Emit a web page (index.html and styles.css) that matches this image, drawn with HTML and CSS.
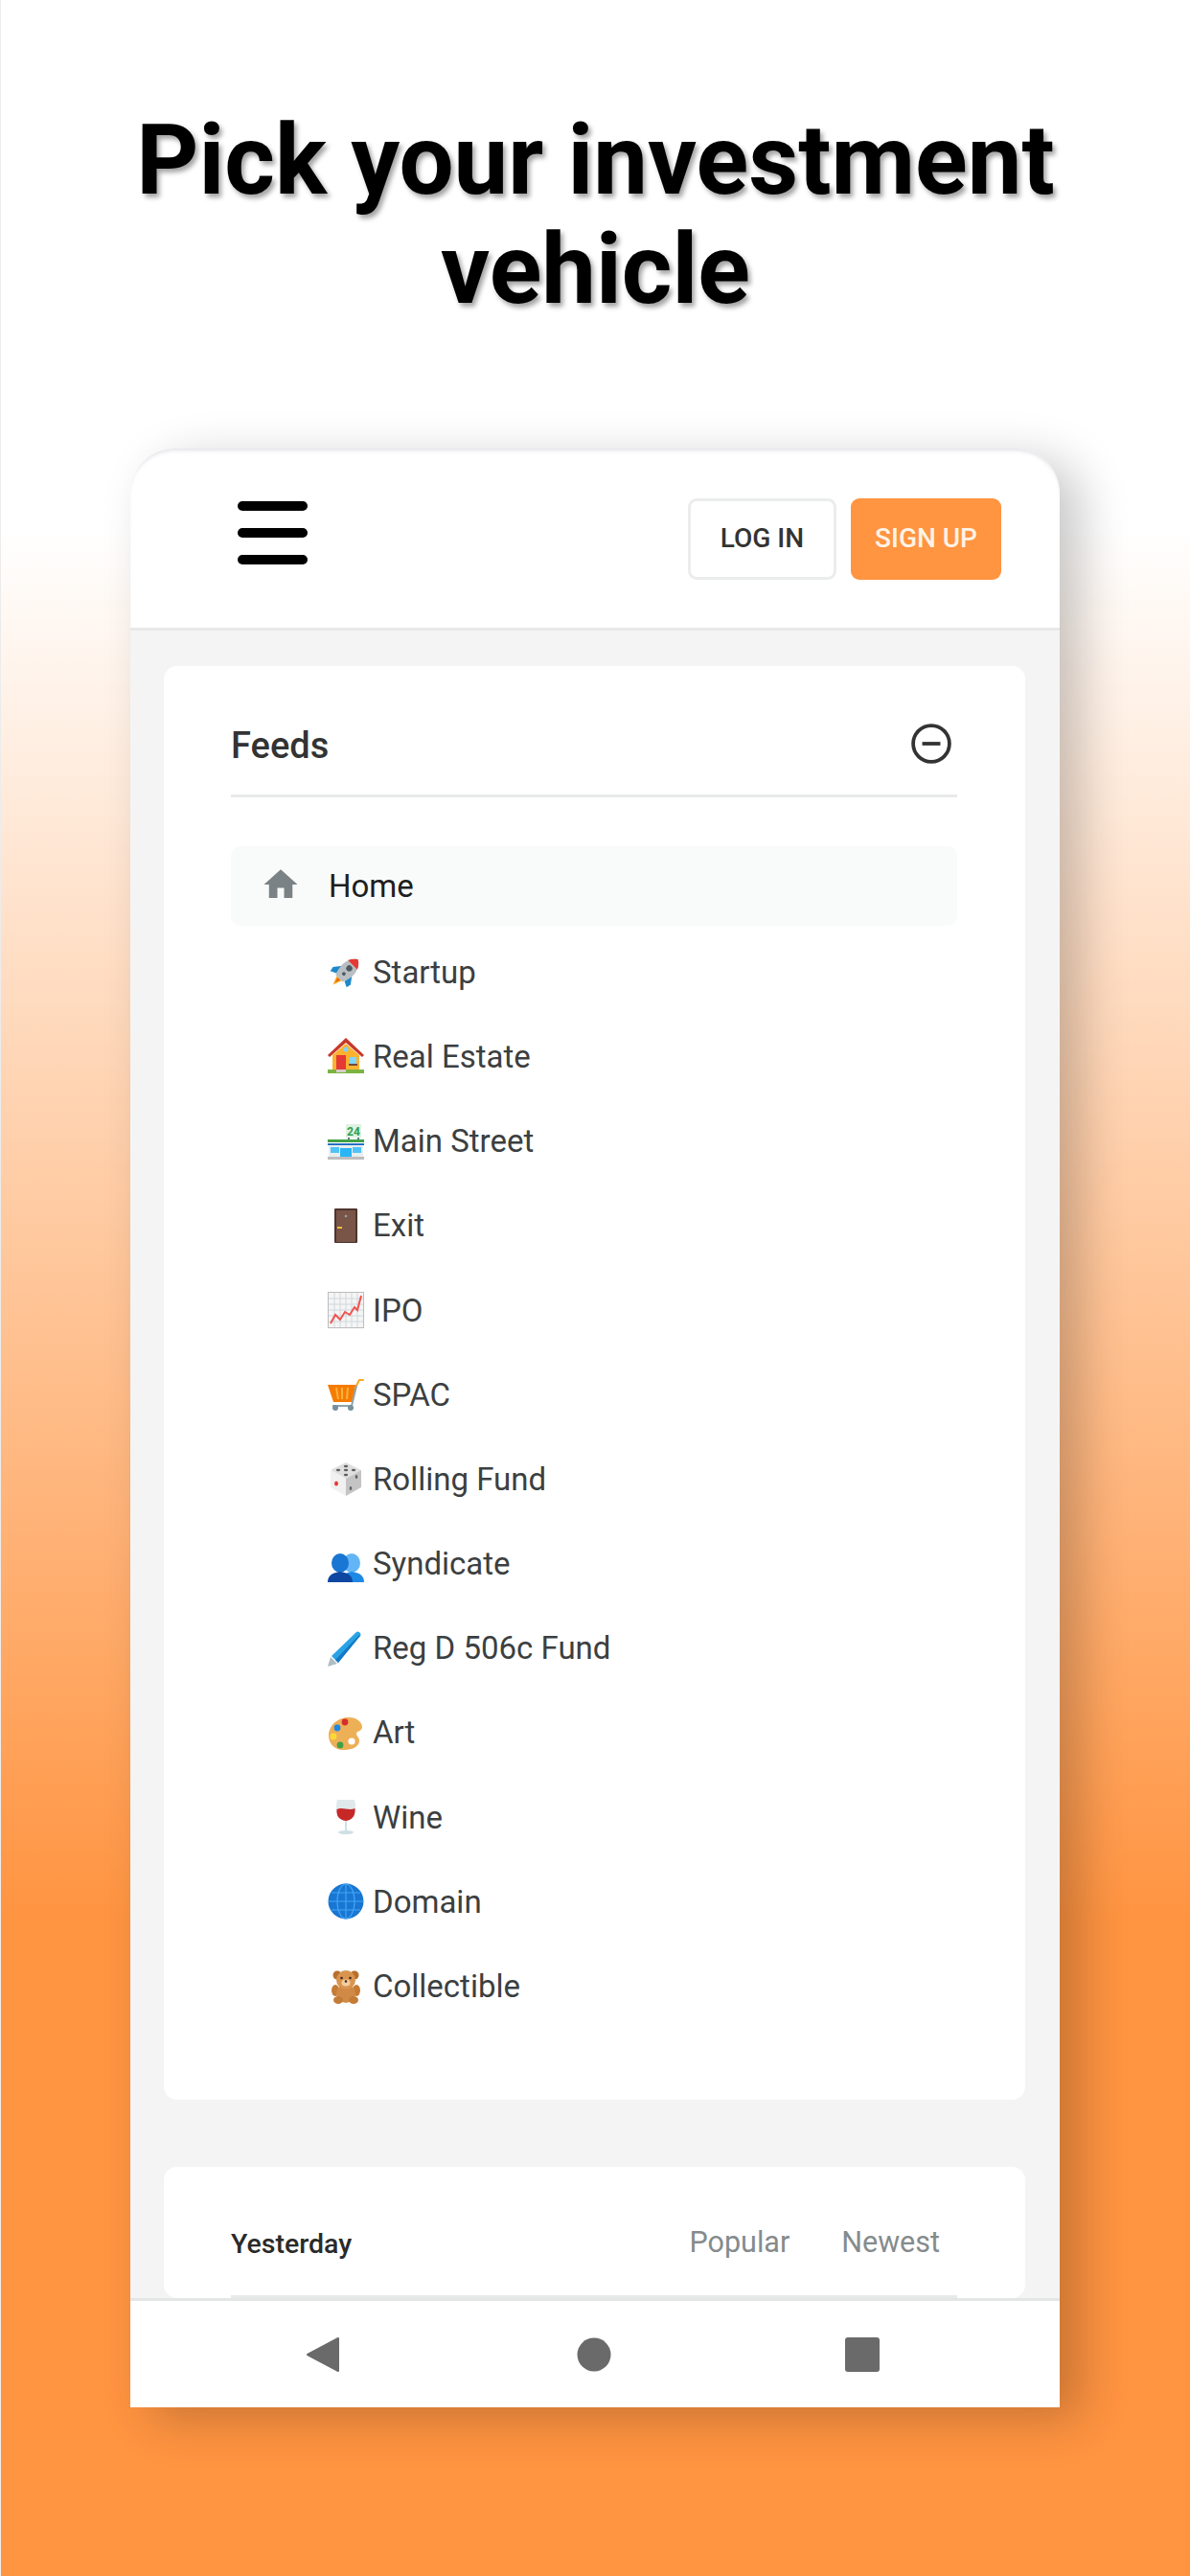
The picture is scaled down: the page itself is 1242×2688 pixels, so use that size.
FILE: index.html
```html
<!DOCTYPE html>
<html lang="en">
<head>
<meta charset="utf-8">
<title>Pick your investment vehicle</title>
<link rel="stylesheet" href="styles.css">
</head>
<body>
<div class="page">
  <h1 class="headline">Pick your investment<br>vehicle</h1>
  <div class="phone">
    <header class="topbar">
      <div class="burger"><span></span><span></span><span></span></div>
      <div class="auth">
        <button class="btn btn-login">LOG IN</button>
        <button class="btn btn-signup">SIGN UP</button>
      </div>
    </header>
    <main class="content">
      <section class="card feeds">
        <div class="feeds-head">
          <h2 class="feeds-title">Feeds</h2>
          <svg class="collapse" viewBox="0 0 40 40"><circle cx="20" cy="20" r="18" fill="none" stroke="#333" stroke-width="3.6"/><path d="M11 20h18" stroke="#333" stroke-width="3.6"/></svg>
        </div>
        <ul class="feed-list">
          <li class="feed feed-home">
            <svg class="home-icon" viewBox="0 0 24 24"><path d="M10 20v-6h4v6h5v-8h3L12 3 2 12h3v8z" fill="#7b8285"/></svg>
            <span>Home</span>
          </li>
          <li class="feed">
            <svg class="emoji" viewBox="0 0 38 38"><g transform="rotate(45 19 19)"><path d="M15.500 29h7L19 38z" fill="#f9a825"/><path d="M17 29h4l-2 6z" fill="#ef6c00"/><path d="M12 17l-6 8 1 5 6-3z" fill="#1e88c9"/><path d="M26 17l6 8-1 5-6-3z" fill="#1e88c9"/><path d="M19 1c5 3 8 9 8 15 0 5-1 9-3 13H14c-2-4-3-8-3-13 0-6 3-12 8-15z" fill="#b9bec2"/><path d="M19 1c3 2 5.500 4.500 6.800 8H12.200C13.500 5.500 16 3 19 1z" fill="#e53935"/><circle cx="19" cy="14" r="3.200" fill="#4b5a63"/><circle cx="19" cy="22" r="1.800" fill="#4b5a63"/></g></svg>
            <span>Startup</span>
          </li>
          <li class="feed">
            <svg class="emoji" viewBox="0 0 38 38"><path d="M5 18L19 6l14 12v15H5z" fill="#fdb22f"/><path d="M19 0L0 18l2 2L19 5l17 15 2-2z" fill="#c6382b"/><rect x="9" y="18" width="10" height="15" fill="#e53935"/><circle cx="19" cy="12" r="2.500" fill="#81d4fa"/><rect x="23" y="20" width="7" height="7" fill="#81d4fa"/><rect x="22" y="27" width="9" height="2" fill="#6d4c41"/><rect x="0" y="33" width="38" height="4" fill="#7cb342"/><rect x="9" y="33" width="10" height="3" fill="#d7ccc8"/></svg>
            <span>Real Estate</span>
          </li>
          <li class="feed">
            <svg class="emoji" viewBox="0 0 38 38"><rect x="19" y="1" width="16" height="14" fill="#dff2e3"/><text class="sign-text" x="27" y="12.500" text-anchor="middle">24</text><rect x="21" y="15" width="2" height="2" fill="#607d8b"/><rect x="31" y="15" width="2" height="2" fill="#607d8b"/><rect x="0" y="17" width="38" height="3" fill="#43a047"/><rect x="0" y="20" width="38" height="1.200" fill="#fff"/><rect x="0" y="21.200" width="38" height="1.800" fill="#1565c0"/><rect x="1" y="23" width="36" height="12" fill="#e8eef0"/><rect x="3" y="25" width="9" height="6" fill="#4fc3f7"/><rect x="26" y="25" width="9" height="6" fill="#4fc3f7"/><rect x="13" y="26" width="12" height="9" fill="#29b6f6"/><rect x="0" y="35" width="38" height="3" fill="#bdbdbd"/></svg>
            <span>Main Street</span>
          </li>
          <li class="feed">
            <svg class="emoji" viewBox="0 0 38 38"><rect x="7" y="1" width="24" height="36" rx="1" fill="#4e342e"/><rect x="9" y="3" width="20" height="33" fill="#795548"/><circle cx="19" cy="9" r="1.300" fill="#90a4ae"/><rect x="10" y="20" width="5" height="2" fill="#fbc02d"/></svg>
            <span>Exit</span>
          </li>
          <li class="feed">
            <svg class="emoji" viewBox="0 0 38 38"><rect x="0.500" y="0.500" width="37" height="37" fill="#f5f5f5" stroke="#bdbdbd"/><path d="M7 1v36M13 1v36M19 1v36M25 1v36M31 1v36M1 7h36M1 13h36M1 19h36M1 25h36M1 31h36" stroke="#cfd8dc" fill="none"/><polyline points="3,33 8,24 13,29 18,21 23,24 28,16 31,19 35,4" fill="none" stroke="#ef5350" stroke-width="2"/></svg>
            <span>IPO</span>
          </li>
          <li class="feed">
            <svg class="emoji" viewBox="0 0 38 38"><path d="M0 9h30l-4 18H6z" fill="#f57c00"/><path d="M9 12l2 12M15 12v12M21 12l-1 12" stroke="#fbb040" stroke-width="2"/><path d="M29 12l4-8h4" fill="none" stroke="#f9a825" stroke-width="2" stroke-linecap="round"/><path d="M30 10l-5 21H5" fill="none" stroke="#90a4ae" stroke-width="2"/><circle cx="8" cy="33" r="3" fill="#78909c"/><circle cx="24" cy="33" r="3" fill="#78909c"/></svg>
            <span>SPAC</span>
          </li>
          <li class="feed">
            <svg class="emoji" viewBox="0 0 38 38"><path d="M19 2l16 8-16 9-16-9z" fill="#dfdfdf"/><path d="M3 10l16 9v18L3 28z" fill="#f1f1f1"/><path d="M35 10L19 19v18l16-9z" fill="#c4c4c4"/><g fill="#5f5f5f"><ellipse cx="19" cy="6" rx="2.200" ry="1.300"/><ellipse cx="11" cy="10" rx="2.200" ry="1.300"/><ellipse cx="27" cy="10" rx="2.200" ry="1.300"/><ellipse cx="19" cy="10" rx="2.200" ry="1.300"/><ellipse cx="19" cy="15" rx="2.200" ry="1.300"/><ellipse cx="30" cy="17" rx="1.300" ry="2"/><ellipse cx="24" cy="29" rx="1.300" ry="2"/></g><ellipse cx="9" cy="24" rx="2" ry="2.500" fill="#e53935"/></svg>
            <span>Rolling Fund</span>
          </li>
          <li class="feed">
            <svg class="emoji" viewBox="0 0 38 38"><ellipse cx="25" cy="18" rx="9" ry="10" fill="#64b5f6"/><path d="M15 38c0-7 3-10 10-11 8 1 13 4 13 11z" fill="#1e88e5"/><ellipse cx="13" cy="18" rx="9" ry="10" fill="#1976d2"/><path d="M0 38c0-7 5-10 13-11 8 1 13 4 13 11z" fill="#0d47a1"/></svg>
            <span>Syndicate</span>
          </li>
          <li class="feed">
            <svg class="emoji" viewBox="0 0 38 38"><path d="M0 38l3-10 7 7z" fill="#b0bec5"/><path d="M4 27L30 2c2-2 6 2 4 4L11 34z" fill="#29a3e6"/><path d="M8 31L33 5c1 1 1 2 0 2L11 34z" fill="#1479c4"/></svg>
            <span>Reg D 506c Fund</span>
          </li>
          <li class="feed">
            <svg class="emoji" viewBox="0 0 38 38"><path d="M22 3C10 3 1 12 1 22c0 9 7 15 15 15 8 0 16-2 17-9 .5-4-3-5-3-8 0-3 6-2 6-7C36 8 30 3 22 3z" fill="#edb057"/><circle cx="18" cy="8" r="3.400" fill="#d32f2f"/><circle cx="10" cy="14" r="3.400" fill="#1e88e5"/><circle cx="6" cy="23" r="3.400" fill="#fdd835"/><circle cx="13" cy="32" r="3.400" fill="#43a047"/><circle cx="25" cy="28" r="3.600" fill="#fff"/></svg>
            <span>Art</span>
          </li>
          <li class="feed">
            <svg class="emoji" viewBox="0 0 38 38"><path d="M10 1h18c2 8 2 21-9 22C8 22 8 9 10 1z" fill="#dfe9ec"/><path d="M9.500 11c6-3 12 2 19-1 .5 7-2 12-9.500 13C11 22 9 17 9.500 11z" fill="#c62828"/><rect x="18" y="23" width="2" height="11" fill="#cfe0e4"/><ellipse cx="19" cy="35" rx="8" ry="2" fill="#cfe0e4"/></svg>
            <span>Wine</span>
          </li>
          <li class="feed">
            <svg class="emoji" viewBox="0 0 38 38"><circle cx="19" cy="19" r="18.500" fill="#1976d2"/><path d="M19 1v36M1 19h36M4 10h30M4 28h30" stroke="#42a5f5" stroke-width="1.200" fill="none"/><ellipse cx="19" cy="19" rx="9" ry="18" stroke="#42a5f5" stroke-width="1.200" fill="none"/></svg>
            <span>Domain</span>
          </li>
          <li class="feed">
            <svg class="emoji" viewBox="0 0 38 38"><circle cx="10" cy="7" r="4.500" fill="#b86f2c"/><circle cx="28" cy="7" r="4.500" fill="#b86f2c"/><ellipse cx="8" cy="23" rx="4" ry="6" fill="#c47b36"/><ellipse cx="30" cy="23" rx="4" ry="6" fill="#c47b36"/><ellipse cx="19" cy="26" rx="10" ry="10" fill="#d08a45"/><ellipse cx="11" cy="33" rx="5" ry="4" fill="#c47b36"/><ellipse cx="27" cy="33" rx="5" ry="4" fill="#c47b36"/><circle cx="19" cy="12" r="10" fill="#d9954f"/><ellipse cx="19" cy="15" rx="4.500" ry="3.500" fill="#f3cf9f"/><circle cx="14.500" cy="10" r="1.300" fill="#3e2723"/><circle cx="23.500" cy="10" r="1.300" fill="#3e2723"/><circle cx="19" cy="13.500" r="1.300" fill="#3e2723"/></svg>
            <span>Collectible</span>
          </li>
        </ul>
      </section>
      <section class="card activity">
        <div class="activity-head">
          <span class="activity-date">Yesterday</span>
          <div class="tabs"><span>Popular</span><span>Newest</span></div>
        </div>
      </section>
    </main>
    <nav class="navbar">
      <svg class="nav-icon" viewBox="0 0 36 38"><path d="M34 2v34L2 19z" fill="#6a6a6a" stroke="#6a6a6a" stroke-width="2" stroke-linejoin="round"/></svg>
      <svg class="nav-icon" viewBox="0 0 36 38"><circle cx="18" cy="19" r="17.500" fill="#6a6a6a"/></svg>
      <svg class="nav-icon nav-recent" viewBox="0 0 36 38"><rect x="0" y="1" width="36" height="36" rx="3" fill="#6a6a6a"/></svg>
    </nav>
  </div>
</div>
</body>
</html>
```

FILE: styles.css
```css
* { box-sizing: border-box; }

html, body {
  margin: 0;
  padding: 0;
}

body {
  font-family: Roboto, "Liberation Sans", sans-serif;
  color: #3c3f41;
}

.page {
  width: 1242px;
  height: 2688px;
  overflow: hidden;
  display: flex;
  flex-direction: column;
  align-items: center;
  border-left: 1px solid #ececec;
  background: linear-gradient(180deg, #fff 0, #fff 550px, #ff9441 2005px, #ff9441 100%);
}

.headline {
  margin: 111px 0 0;
  height: 357px;
  font-size: 101.2px;
  line-height: 114px;
  font-weight: 700;
  color: #000;
  text-align: center;
  text-shadow: 3px 4px 5px rgba(0, 0, 0, 0.36);
}

.phone {
  width: 970px;
  height: 2044px;
  margin-left: -1px;
  display: flex;
  flex-direction: column;
  background: #fff;
  border-radius: 46px 46px 0 0;
  box-shadow: 22px 12px 50px rgba(0, 0, 0, 0.22);
  overflow: hidden;
  flex: none;
}

.topbar {
  height: 190px;
  flex: none;
  display: flex;
  justify-content: space-between;
  padding: 52px 61px 0 112px;
  border-bottom: 3px solid #e8e9e9;
  box-shadow: inset 0 4px 4px -2px rgba(165, 170, 185, 0.35);
  border-radius: 46px 46px 0 0;
}

.burger {
  width: 73px;
  height: 66px;
  margin-top: 3px;
  display: flex;
  flex-direction: column;
  justify-content: space-between;
}

.burger span {
  height: 10px;
  background: #000;
  border-radius: 5px;
}

.auth {
  display: flex;
  gap: 15px;
  height: 85px;
}

.btn {
  height: 85px;
  border-radius: 9px;
  font-family: inherit;
  font-size: 28px;
  font-weight: 500;
  padding: 0 0 2px;
}

.btn-login {
  width: 155px;
  background: #fff;
  color: #333;
  border: 3px solid #ebecec;
}

.btn-signup {
  width: 157px;
  background: #ff9441;
  color: #fff3e6;
  border: 0;
}

.content {
  flex: 1;
  min-height: 0;
  overflow: hidden;
  background: #f4f4f4;
  padding: 37px 36px 0 35px;
}

.card {
  background: #fff;
  border-radius: 14px;
  padding: 0 71px 0 70px;
}

.feeds {
  height: 1496px;
  margin-bottom: 70px;
}

.feeds-head {
  height: 137px;
  display: flex;
  align-items: center;
  justify-content: space-between;
  padding: 28px 6px 0 0;
  border-bottom: 3px solid #e8e9e9;
}

.feeds-title {
  margin: 4px 0 0;
  font-size: 38px;
  font-weight: 500;
  color: #333;
}

.collapse {
  width: 42px;
  height: 42px;
}

.feed-list {
  list-style: none;
  margin: 51px 0 0;
  padding: 0;
  display: flex;
  flex-direction: column;
  gap: 5px;
}

.feed {
  height: 83.2px;
  display: flex;
  align-items: center;
  gap: 9px;
  padding-left: 101px;
  font-size: 33px;
  border-radius: 10px;
}

.feed-home {
  background: #f9fafa;
  padding-left: 31px;
  gap: 29px;
  margin-bottom: 1.5px;
  color: #1e1e1e;
}

.home-icon {
  width: 42px;
  height: 42px;
  margin-top: -4px;
}

.emoji {
  width: 38px;
  height: 38px;
  flex: none;
}

.sign-text {
  font-family: Roboto, sans-serif;
  font-size: 12px;
  font-weight: 700;
  fill: #2e9e4f;
}

.activity-head {
  height: 137px;
  display: flex;
  align-items: center;
  justify-content: space-between;
  padding: 26px 18px 0 0;
  border-bottom: 3px solid #e8e9e9;
}

.activity-date {
  font-size: 28.5px;
  font-weight: 500;
  color: #2a2a2a;
}

.tabs {
  display: flex;
  gap: 54px;
  font-size: 30.5px;
  color: #858b8d;
  margin-bottom: 4px;
}

.navbar {
  height: 114px;
  flex: none;
  display: flex;
  align-items: center;
  gap: 247px;
  padding: 0 0 0 183px;
  background: #fff;
  border-top: 3px solid #e4e5e5;
}

.nav-icon {
  width: 36px;
  height: 38px;
}

.nav-recent {
  margin-left: -3px;
}
```
